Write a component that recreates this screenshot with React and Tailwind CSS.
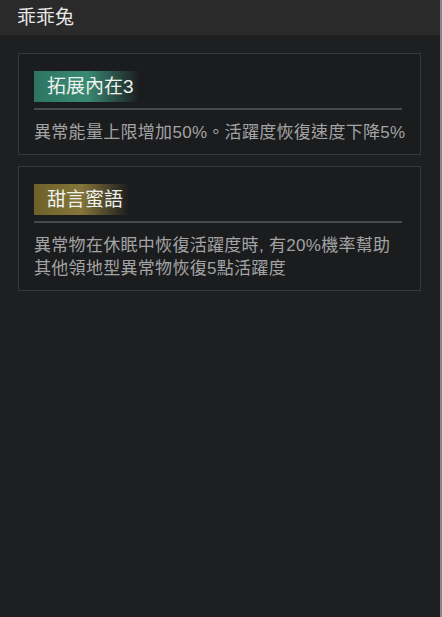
const font = { fontFamily: '"Liberation Sans", "Noto Sans CJK TC", sans-serif' };

const skills = [
  {
    name: "拓展內在3",
    tone: "from-[#2c7561] via-[#3a8a73]",
    lines: ["異常能量上限增加50%。活躍度恢復速度下降5%"],
  },
  {
    name: "甜言蜜語",
    tone: "from-[#6e6128] via-[#85753a]",
    lines: ["異常物在休眠中恢復活躍度時, 有20%機率幫助", "其他領地型異常物恢復5點活躍度"],
  },
];

const SkillCard = ({ name, tone, lines }) => (
  <div className="border border-[#37383a] bg-[#1b1c1e] pl-[15px] pr-[18px] pt-[17px] pb-[10px]">
    <div className={`inline-flex h-[31px] items-center bg-linear-to-r ${tone} to-transparent pl-[13px] pr-[6px]`}>
      <span className="text-[19px] leading-none text-[#eef2ee]">{name}</span>
    </div>
    <div className="mt-[6px] h-[2px] bg-[#47484a]" />
    <div className="mt-[11px] whitespace-nowrap text-[17px] leading-[23px] tracking-[0.3px] text-[#a3a3a3]">
      {lines.map((l) => (
        <div key={l}>{l}</div>
      ))}
    </div>
  </div>
);

export default function App() {
  return (
    <div style={font} className="flex min-h-[617px] w-full flex-col border-r-2 border-[#858a8f] bg-[#1e1f21]">
      <div className="flex h-[35px] items-center bg-[#2a2a2b] px-[17px] pt-[1px]">
        <span className="text-[19px] text-[#e8e8e8]">乖乖兔</span>
      </div>
      <div className="flex flex-col gap-[11px] pl-[18px] pr-[19px] pt-[18px]">
        {skills.map((s) => (
          <SkillCard key={s.name} {...s} />
        ))}
      </div>
    </div>
  );
}
